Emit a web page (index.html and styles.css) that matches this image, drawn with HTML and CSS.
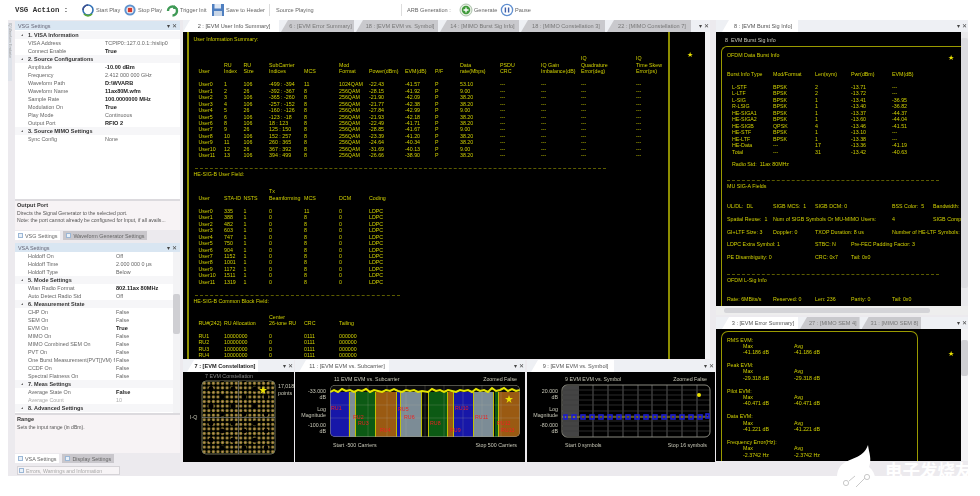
FILE: index.html
```html
<!DOCTYPE html>
<html lang="en">
<head>
<meta charset="utf-8">
<title>VSG Action</title>
<link rel="stylesheet" href="styles.css">
</head>
<body>
<div class="app">
  <header class="toolbar">
    <span class="action">VSG Action :</span>
    <span class="tool t-start"><svg class="ico" viewBox="0 0 14 14"><circle cx="7" cy="7" r="5" fill="#fff" stroke="#2f6fb5" stroke-width="1.6"/><path d="M2 7a5 5 0 0 1 5-5" fill="none" stroke="#3d4f8f" stroke-width="1.6"/><path d="M3 11a5.5 5.5 0 0 0 8 0" fill="none" stroke="#57a63a" stroke-width="1.8"/></svg>Start Play</span>
    <span class="tool t-stop"><svg class="ico" viewBox="0 0 14 14"><circle cx="7" cy="7" r="5.6" fill="#5f93cf"/><circle cx="7" cy="7" r="3.6" fill="#fff"/><rect x="4.8" y="4.8" width="4.4" height="4.4" fill="#d23a2e"/></svg>Stop Play</span>
    <span class="tool t-trig"><svg class="ico" viewBox="0 0 14 14"><path d="M3 8a4.5 4.5 0 1 1 4.5 4.5" fill="none" stroke="#3f9a56" stroke-width="2.4"/><path d="M9 2l4 4H8z" fill="#3f9a56"/></svg>Trigger Init</span>
    <span class="tool t-save"><svg class="ico" viewBox="0 0 14 14"><rect x="1" y="1" width="12" height="12" fill="#4f7fc0"/><rect x="3.5" y="1" width="6.5" height="4.5" fill="#dfe8f4"/><rect x="3" y="8" width="8" height="5" fill="#c9d6e6"/></svg>Save to Header</span>
    <span class="sep"></span>
    <span class="tool t-src">Source Playing</span>
    <span class="sep sep-arb"></span>
    <span class="tool t-arb">ARB Generation :</span>
    <span class="tool t-gen"><svg class="ico" viewBox="0 0 14 14"><circle cx="7" cy="7" r="6" fill="#e6efe2" stroke="#9ab59a" stroke-width=".8"/><circle cx="7" cy="7" r="4.2" fill="#3f9a3a"/><path d="M7 4.5v5M4.5 7h5" stroke="#fff" stroke-width="1.3"/></svg>Generate</span>
    <span class="tool t-pause"><svg class="ico" viewBox="0 0 14 14"><circle cx="7" cy="7" r="5.6" fill="#fff" stroke="#5f8fd0" stroke-width="1.3"/><path d="M5.4 4.6v4.8M8.6 4.6v4.8" stroke="#3f5fa8" stroke-width="1.4"/></svg>Pause</span>
  </header>

  <div class="workspace">
    <div class="rail"><span class="rail-tab">IQ Waveform Evaluator</span></div>

    <aside class="left">
      <section class="prop-panel prop-top">
        <div class="title-bar"><span>VSG Settings</span><span class="ctrl">&#9662; &#10005;</span></div>
        <div class="prop-list">
          <div class="cat">1. VISA Information</div>
          <div class="row"><span>VISA Address</span><span>TCPIP0::127.0.0.1::hislip0</span></div>
          <div class="row"><span>Connect Enable</span><b>True</b></div>
          <div class="cat">2. Source Configurations</div>
          <div class="row"><span>Amplitude</span><b>-10.00 dBm</b></div>
          <div class="row"><span>Frequency</span><span>2.412 000 000 GHz</span></div>
          <div class="row"><span>Waveform Path</span><b>D:\WVARB</b></div>
          <div class="row"><span>Waveform Name</span><b>11ax80M.wfm</b></div>
          <div class="row"><span>Sample Rate</span><b>100.0000000 MHz</b></div>
          <div class="row"><span>Modulation On</span><b>True</b></div>
          <div class="row"><span>Play Mode</span><span>Continuous</span></div>
          <div class="row"><span>Output Port</span><b>RFIO 2</b></div>
          <div class="cat">3. Source MIMO Settings</div>
          <div class="row"><span>Sync Config</span><span>None</span></div>
        </div>
        <div class="desc desc-top"><b>Output Port</b><br>Directs the Signal Generator to the selected port.<br>Note: the port cannot already be configured for Input, if all avails...</div>
        <div class="bottom-tabs"><span class="btab on"><i></i>VSG Settings</span><span class="btab"><i></i>Waveform Generator Settings</span></div>
      </section>

      <section class="prop-panel prop-low">
        <div class="title-bar"><span>VSA Settings</span><span class="ctrl">&#9662; &#10005;</span></div>
        <div class="prop-scroll">
          <div class="prop-list prop-list-low">
            <div class="row"><span>Holdoff On</span><span>Off</span></div>
            <div class="row"><span>Holdoff Time</span><span>2.000 000 0 &#956;s</span></div>
            <div class="row"><span>Holdoff Type</span><span>Below</span></div>
            <div class="cat">5. Mode Settings</div>
            <div class="row"><span>Wlan Radio Format</span><b>802.11ax 80MHz</b></div>
            <div class="row"><span>Auto Detect Radio Std</span><span>Off</span></div>
            <div class="cat">6. Measurement State</div>
            <div class="row"><span>CHP On</span><span>False</span></div>
            <div class="row"><span>SEM On</span><span>False</span></div>
            <div class="row"><span>EVM On</span><b>True</b></div>
            <div class="row"><span>MIMO On</span><span>False</span></div>
            <div class="row"><span>MIMO Combined SEM On</span><span>False</span></div>
            <div class="row"><span>PVT On</span><span>False</span></div>
            <div class="row"><span>One Burst Measurement(PVT[]VM) f</span><span>False</span></div>
            <div class="row"><span>CCDF On</span><span>False</span></div>
            <div class="row"><span>Spectral Flatness On</span><span>False</span></div>
            <div class="cat">7. Meas Settings</div>
            <div class="row"><span>Average State On</span><b>False</b></div>
            <div class="row dim"><span>Average Count</span><span>10</span></div>
            <div class="cat">8. Advanced Settings</div>
          </div>
          <div class="vscroll vs-low"><span></span></div>
        </div>
        <div class="desc desc-low"><b>Range</b><br>Sets the input range (in dBm).</div>
        <div class="bottom-tabs bt-low"><span class="btab on"><i></i>VSA Settings</span><span class="btab"><i></i>Display Settings</span></div>
      </section>
      <div class="err-tab"><i></i>Errors, Warnings and Information</div>
    </aside>

    <main class="center">
      <section class="doc doc-main">
        <nav class="tabs">
          <span class="tab on tw1">2 : [EVM User Info Summary]</span>
          <span class="tab tw2">6 : [EVM Error Summary]</span>
          <span class="tab tw3">18 : [EVM EVM vs. Symbol]</span>
          <span class="tab tw4">14 : [MIMO Burst Sig Info]</span>
          <span class="tab tw5">18 : [MIMO Constellation 3]</span>
          <span class="tab tw5">22 : [MIMO Constellation 7]</span>
          <span class="ctrl">&#9662; &#10005;</span>
        </nav>
        <div class="doc-body">
          <div class="screen">
            <div class="frame">
              <p class="t t-first">User Information Summary:</p>
              <table class="data">
                <tr class="head"><th>User</th><th>RU<br>Index</th><th>RU<br>Size</th><th>SubCarrier<br>Indices</th><th>MCS</th><th>Mod<br>Format</th><th>Power(dBm)</th><th>EVM(dB)</th><th>P/F</th><th>Data<br>rate(Mbps)</th><th>PSDU<br>CRC</th><th>IQ Gain<br>Imbalance(dB)</th><th>IQ<br>Quadrature<br>Error(deg)</th><th>IQ<br>Time Skew<br>Error(ps)</th></tr>
                <tr><td>User0</td><td>1</td><td>106</td><td>-499 : -394</td><td>11</td><td>1024QAM</td><td>-22.43</td><td>-41.57</td><td>P</td><td>53.10</td><td>---</td><td>---</td><td>---</td><td>---</td></tr>
                <tr><td>User1</td><td>2</td><td>26</td><td>-392 : -367</td><td>8</td><td>256QAM</td><td>-28.15</td><td>-41.92</td><td>P</td><td>9.00</td><td>---</td><td>---</td><td>---</td><td>---</td></tr>
                <tr><td>User2</td><td>3</td><td>106</td><td>-365 : -260</td><td>8</td><td>256QAM</td><td>-21.90</td><td>-42.09</td><td>P</td><td>38.20</td><td>---</td><td>---</td><td>---</td><td>---</td></tr>
                <tr><td>User3</td><td>4</td><td>106</td><td>-257 : -152</td><td>8</td><td>256QAM</td><td>-21.77</td><td>-42.38</td><td>P</td><td>38.20</td><td>---</td><td>---</td><td>---</td><td>---</td></tr>
                <tr><td>User4</td><td>5</td><td>26</td><td>-160 : -126</td><td>8</td><td>256QAM</td><td>-27.84</td><td>-42.99</td><td>P</td><td>9.00</td><td>---</td><td>---</td><td>---</td><td>---</td></tr>
                <tr><td>User5</td><td>6</td><td>106</td><td>-123 : -18</td><td>8</td><td>256QAM</td><td>-21.93</td><td>-42.18</td><td>P</td><td>38.20</td><td>---</td><td>---</td><td>---</td><td>---</td></tr>
                <tr><td>User6</td><td>8</td><td>106</td><td>18 : 123</td><td>8</td><td>256QAM</td><td>-22.49</td><td>-41.71</td><td>P</td><td>38.20</td><td>---</td><td>---</td><td>---</td><td>---</td></tr>
                <tr><td>User7</td><td>9</td><td>26</td><td>125 : 150</td><td>8</td><td>256QAM</td><td>-28.85</td><td>-41.67</td><td>P</td><td>9.00</td><td>---</td><td>---</td><td>---</td><td>---</td></tr>
                <tr><td>User8</td><td>10</td><td>106</td><td>152 : 257</td><td>8</td><td>256QAM</td><td>-23.39</td><td>-41.20</td><td>P</td><td>38.20</td><td>---</td><td>---</td><td>---</td><td>---</td></tr>
                <tr><td>User9</td><td>11</td><td>106</td><td>260 : 365</td><td>8</td><td>256QAM</td><td>-24.64</td><td>-40.34</td><td>P</td><td>38.20</td><td>---</td><td>---</td><td>---</td><td>---</td></tr>
                <tr><td>User10</td><td>12</td><td>26</td><td>367 : 392</td><td>8</td><td>256QAM</td><td>-31.69</td><td>-40.13</td><td>P</td><td>9.00</td><td>---</td><td>---</td><td>---</td><td>---</td></tr>
                <tr><td>User11</td><td>13</td><td>106</td><td>394 : 499</td><td>8</td><td>256QAM</td><td>-26.66</td><td>-38.90</td><td>P</td><td>38.20</td><td>---</td><td>---</td><td>---</td><td>---</td></tr>
              </table>
              <div class="dash dash-1"></div>
              <p class="t">HE-SIG-B User Field:</p>
              <table class="data data-2">
                <tr class="head"><th>User</th><th>STA-ID</th><th>NSTS</th><th>Tx<br>Beamforming</th><th>MCS</th><th>DCM</th><th>Coding</th><th></th><th></th><th></th><th></th><th></th><th></th><th></th></tr>
                <tr><td>User0</td><td>335</td><td>1</td><td>0</td><td>11</td><td>0</td><td>LDPC</td></tr>
                <tr><td>User1</td><td>388</td><td>1</td><td>0</td><td>8</td><td>0</td><td>LDPC</td></tr>
                <tr><td>User2</td><td>482</td><td>1</td><td>0</td><td>8</td><td>0</td><td>LDPC</td></tr>
                <tr><td>User3</td><td>603</td><td>1</td><td>0</td><td>8</td><td>0</td><td>LDPC</td></tr>
                <tr><td>User4</td><td>747</td><td>1</td><td>0</td><td>8</td><td>0</td><td>LDPC</td></tr>
                <tr><td>User5</td><td>750</td><td>1</td><td>0</td><td>8</td><td>0</td><td>LDPC</td></tr>
                <tr><td>User6</td><td>904</td><td>1</td><td>0</td><td>8</td><td>0</td><td>LDPC</td></tr>
                <tr><td>User7</td><td>1152</td><td>1</td><td>0</td><td>8</td><td>0</td><td>LDPC</td></tr>
                <tr><td>User8</td><td>1001</td><td>1</td><td>0</td><td>8</td><td>0</td><td>LDPC</td></tr>
                <tr><td>User9</td><td>1172</td><td>1</td><td>0</td><td>8</td><td>0</td><td>LDPC</td></tr>
                <tr><td>User10</td><td>1511</td><td>1</td><td>0</td><td>8</td><td>0</td><td>LDPC</td></tr>
                <tr><td>User11</td><td>1319</td><td>1</td><td>0</td><td>8</td><td>0</td><td>LDPC</td></tr>
              </table>
              <div class="dash dash-2"></div>
              <p class="t">HE-SIG-B Common Block Field:</p>
              <table class="data data-3">
                <tr class="head"><th>RU#(242)</th><th>RU Allocation</th><th></th><th>Center<br>26-tone RU</th><th>CRC</th><th>Tailing</th><th></th><th></th><th></th><th></th><th></th><th></th><th></th><th></th></tr>
                <tr><td>RU1</td><td>10000000</td><td></td><td>0</td><td>0111</td><td>000000</td></tr>
                <tr><td>RU2</td><td>10000000</td><td></td><td>0</td><td>0111</td><td>000000</td></tr>
                <tr><td>RU3</td><td>10000000</td><td></td><td>0</td><td>0111</td><td>000000</td></tr>
                <tr><td>RU4</td><td>10000000</td><td></td><td>0</td><td>0111</td><td>000000</td></tr>
              </table>
            </div>
            <span class="star star-main">&#9733;</span>
          </div>
          <div class="vscroll vs-main"><span></span></div>
        </div>
      </section>

      <div class="charts">
        <section class="chart c1">
          <nav class="tabs ctabs"><span class="tab on strong">7 : [EVM Constellation]</span><span class="ctrl">&#9662; &#10005;</span></nav>
          <svg class="plot" viewBox="0 0 111 90" width="111" height="90">
            <defs>
              <pattern id="qam" width="4.56" height="4.56" patternUnits="userSpaceOnUse" x="19" y="9">
                <circle cx="2.28" cy="2.28" r="1.6" fill="#9a8f2c"/>
                <circle cx="2.28" cy="2.28" r=".6" fill="#c9788a"/>
              </pattern>
              <pattern id="holes" width="22" height="17" patternUnits="userSpaceOnUse" x="24" y="14">
                <circle cx="4" cy="3" r="2.6" fill="#000"/><circle cx="15" cy="11" r="2.4" fill="#000"/>
              </pattern>
            </defs>
            <text class="lbl dimtxt" x="22" y="6">7  EVM Constellation</text>
            <rect x="19" y="9" width="73" height="73" rx="4" fill="url(#qam)" stroke="#8d8d70" stroke-width=".8"/>
            <rect x="19" y="9" width="73" height="73" rx="4" fill="url(#holes)"/>
            <path d="M55.5 9v73M19 45.5h73" stroke="#8a8a8a" stroke-width=".7"/>
            <text class="lbl" x="95" y="16">17,018</text>
            <text class="lbl" x="95" y="23">points</text>
            <text class="lbl" x="7" y="47">I-Q</text>
            <polygon points="80,14 81,17 84,17 81.5,19 82.5,22 80,20 77.500,22 78.500,19 76,17 79,17" fill="#e8e000"/>
          </svg>
        </section>

        <section class="chart c2">
          <nav class="tabs ctabs"><span class="tab on">11 : [EVM EVM vs. Subcarrier]</span><span class="ctrl">&#9662; &#10005;</span></nav>
          <svg class="plot" viewBox="0 0 230 90" width="230" height="90">
            <defs><clipPath id="pc2"><rect x="35" y="13" width="190" height="52" rx="5"/></clipPath></defs>
            <text class="lbl" x="39" y="9">11  EVM EVM vs. Subcarrier</text>
            <text class="lbl" x="222" y="9" text-anchor="end">Zoomed False</text>
            <g class="lbl" text-anchor="end">
              <text x="31" y="21">-33.000</text><text x="31" y="27">dB</text>
              <text x="31" y="39">Log</text><text x="31" y="45">Magnitude</text>
              <text x="31" y="55">-100.00</text><text x="31" y="61">dB</text>
            </g>
            <g clip-path="url(#pc2)">
              <rect x="35" y="13" width="190" height="52" fill="#0a0a0a"/>
              <rect x="35" y="20" width="19" height="45" fill="#1717a8"/>
              <rect x="55" y="20" width="5" height="45" fill="#7c8c96"/>
              <rect x="61" y="20" width="19" height="45" fill="#0c5a14"/>
              <rect x="81" y="20" width="20" height="45" fill="#9a5a12"/>
              <rect x="102" y="20" width="4" height="45" fill="#1717a8"/>
              <rect x="106" y="20" width="20" height="45" fill="#7c8c96"/>
              <rect x="134" y="20" width="18" height="45" fill="#0c5a14"/>
              <rect x="153" y="20" width="5" height="45" fill="#9a5a12"/>
              <rect x="159" y="20" width="19" height="45" fill="#1717a8"/>
              <rect x="179" y="20" width="19" height="45" fill="#7c8c96"/>
              <rect x="200" y="20" width="3" height="45" fill="#0c5a14"/>
              <rect x="204" y="20" width="21" height="45" fill="#9a5a12"/>
              <path d="M35 33h190M35 46h190M54 13v52M73 13v52M92 13v52M111 13v52M130 13v52M149 13v52M168 13v52M187 13v52M206 13v52" stroke="#b5b5a5" stroke-opacity=".35" stroke-width=".6"/>
              <path d="M54.500 20v45M60.500 20v45M80.500 20v45M101.500 20v45M105.500 20v45M126.500 20v45M133.500 20v45M152.500 20v45M158.500 20v45M178.500 20v45M198.500 20v45M203.500 20v45" stroke="#d4d400" stroke-width=".9"/>
              <polyline points="35,20 39,18 43,20 47,17 51,19 55,18 59,20 63,18 67,19 71,17 75,20 79,18 83,19 87,20 91,18 95,19 99,17 103,19 107,20 111,18 115,19 119,18 123,20 127,19 133,20 137,17 141,19 145,18 149,20 153,18 157,19 161,20 165,18 169,19 173,18 177,20 181,17 185,19 189,18 193,20 197,16 201,19 205,18 209,16 213,19 217,17 221,19 225,18" fill="none" stroke="#e6e600" stroke-width="2"/>
              <rect x="35" y="13" width="190" height="52" rx="5" fill="none" stroke="#9a9a8a" stroke-width="1"/>
            </g>
            <g class="ru">
              <text x="36" y="38">RU1</text><text x="58" y="47">RU2</text><text x="63" y="53">RU3</text><text x="85" y="60">RU4</text><text x="103" y="39">RU5</text><text x="109" y="47">RU6</text><text x="135" y="53">RU8</text><text x="155" y="60">RU9</text><text x="160" y="38">RU10</text><text x="180" y="47">RU11</text><text x="202" y="53">RU12</text><text x="206" y="60">RU13</text>
            </g>
            <polygon points="214,23 215,26 218,26 215.500,28 216.500,31 214,29 211.500,31 212.500,28 210,26 213,26" fill="#e8e000"/>
            <text class="lbl" x="38" y="75">Start -500  Carriers</text>
            <text class="lbl" x="222" y="75" text-anchor="end">Stop 500  Carriers</text>
          </svg>
        </section>

        <section class="chart c3">
          <nav class="tabs ctabs"><span class="tab on">9 : [EVM EVM vs. Symbol]</span><span class="ctrl">&#9662; &#10005;</span></nav>
          <svg class="plot" viewBox="0 0 188 90" width="188" height="90">
            <text class="lbl" x="38" y="9">9  EVM EVM vs. Symbol</text>
            <text class="lbl" x="180" y="9" text-anchor="end">Zoomed False</text>
            <g class="lbl" text-anchor="end">
              <text x="31" y="21">20.000</text><text x="31" y="27">dB</text>
              <text x="31" y="39">Log</text><text x="31" y="45">Magnitude</text>
              <text x="31" y="55">-80.000</text><text x="31" y="61">dB</text>
            </g>
            <rect x="36" y="14" width="16" height="50" fill="#444"/>
            <path d="M66 13v52M81 13v52M96 13v52M111 13v52M125 13v52M140 13v52M155 13v52M170 13v52" stroke="#6f6f6f" stroke-width=".8"/>
            <path d="M35 18h148M35 23h148M35 28h148M35 33h148M35 39h148M35 44h148M35 49h148M35 54h148M35 59h148" stroke="#3d3d3d" stroke-width=".7"/>
            <path d="M35 45h148" stroke="#b5a520" stroke-width="1"/>
            <rect x="35" y="13" width="148" height="52" rx="5" fill="none" stroke="#8a8a80" stroke-width="1"/>
            <g fill="none" stroke="#1d1dd0" stroke-width="1.6">
              <rect x="37" y="43" width="3" height="4"/><rect x="45" y="43" width="4" height="4"/><rect x="54" y="43" width="4" height="4"/><rect x="63" y="43" width="4" height="4"/><rect x="72" y="43" width="4" height="4"/><rect x="81" y="43" width="4" height="4"/><rect x="90" y="43" width="4" height="4"/><rect x="99" y="43" width="4" height="4"/><rect x="108" y="43" width="4" height="4"/><rect x="117" y="43" width="4" height="4"/><rect x="126" y="43" width="4" height="4"/><rect x="135" y="43" width="4" height="4"/><rect x="144" y="43" width="4" height="4"/><rect x="153" y="43" width="4" height="4"/><rect x="162" y="43" width="4" height="4"/><rect x="171" y="43" width="4" height="4"/><rect x="179" y="42" width="3" height="4"/>
            </g>
            <circle cx="172" cy="23" r="2" fill="#e8e000"/>
            <text class="lbl" x="38" y="75">Start 0  symbols</text>
            <text class="lbl" x="180" y="75" text-anchor="end">Stop 16  symbols</text>
          </svg>
        </section>
      </div>
    </main>

    <aside class="right">
      <section class="doc doc-burst">
        <nav class="tabs rtabs"><span class="tab on">8 : [EVM Burst Sig Info]</span><span class="ctrl">&#9662; &#10005;</span></nav>
        <div class="doc-body db-burst">
          <div class="screen">
            <p class="t burst-title">8  EVM Burst Sig Info</p>
            <div class="frame frame-burst">
              <p class="t">OFDM Data Burst Info</p>
              <table class="burst">
                <tr class="head"><th>Burst Info Type</th><th>Mod/Format</th><th>Len(sym)</th><th>Pwr(dBm)</th><th>EVM(dB)</th></tr>
                <tr><td>L-STF</td><td>BPSK</td><td>2</td><td>-13.71</td><td>---</td></tr>
                <tr><td>L-LTF</td><td>BPSK</td><td>2</td><td>-13.72</td><td>---</td></tr>
                <tr><td>L-SIG</td><td>BPSK</td><td>1</td><td>-13.41</td><td>-36.95</td></tr>
                <tr><td>R-LSIG</td><td>BPSK</td><td>1</td><td>-13.40</td><td>-36.82</td></tr>
                <tr><td>HE-SIGA1</td><td>BPSK</td><td>1</td><td>-13.37</td><td>-44.37</td></tr>
                <tr><td>HE-SIGA2</td><td>BPSK</td><td>1</td><td>-13.60</td><td>-44.04</td></tr>
                <tr><td>HE-SIGB</td><td>QPSK</td><td>4</td><td>-13.46</td><td>-41.51</td></tr>
                <tr><td>HE-STF</td><td>BPSK</td><td>1</td><td>-13.10</td><td>---</td></tr>
                <tr><td>HE-LTF</td><td>BPSK</td><td>1</td><td>-13.38</td><td>---</td></tr>
                <tr><td>HE-Data</td><td>---</td><td>17</td><td>-13.36</td><td>-41.19</td></tr>
                <tr><td>Total</td><td>---</td><td>31</td><td>-13.42</td><td>-40.63</td></tr>
              </table>
              <p class="t radio">Radio Std:  11ax 80MHz</p>
              <div class="dash dash-r"></div>
              <p class="t">MU SIG-A Fields</p>
              <div class="fields f-first">
                <span>UL/DL:  &nbsp;DL</span><span>SIGB MCS:  &nbsp;1</span><span>SIGB DCM:  0</span><span></span><span>BSS Color:  &nbsp;5</span><span>Bandwidth:</span>
              </div>
              <div class="fields">
                <span class="sr">Spatial Reuse: &nbsp;1</span><span>Num of SIGB Symbols Or MU-MIMO Users:</span><span></span><span></span><span>4</span><span>SIGB Compression</span>
              </div>
              <div class="fields">
                <span>GI+LTF Size: 3</span><span>Doppler: 0</span><span>TXOP Duration:  8 us</span><span></span><span>Number of HE-LTF Symbols:</span><span></span>
              </div>
              <div class="fields">
                <span>LDPC Extra Symbol:  1</span><span></span><span>STBC:  N</span><span>Pre-FEC Padding Factor:  3</span><span></span><span></span>
              </div>
              <div class="fields">
                <span>PE Disambiguity:  0</span><span></span><span>CRC:  0x7</span><span>Tail:  0x0</span><span></span><span></span>
              </div>
              <div class="dash dash-r dash-r2"></div>
              <p class="t">OFDM L-Sig Info</p>
              <div class="fields f-rate">
                <span>Rate: 6MBits/s</span><span>Reserved: 0</span><span>Len: 236</span><span>Parity: 0</span><span>Tail: 0x0</span><span></span>
              </div>
            </div>
            <span class="star star-r1">&#9733;</span>
          </div>
          <div class="vscroll vs-burst"><span></span></div>
        </div>
        <div class="hscroll"><span></span></div>
      </section>

      <section class="doc doc-err">
        <nav class="tabs rtabs"><span class="tab on">3 : [EVM Error Summary]</span><span class="tab">27 : [MIMO SEM 4]</span><span class="tab">31 : [MIMO SEM 8]</span><span class="ctrl">&#9662; &#10005;</span></nav>
        <div class="doc-body db-err">
          <div class="screen">
            <div class="frame frame-err">
              <p class="t">RMS EVM:</p><div class="maxavg"><span>Max</span><span>Avg</span><span>-41.186 dB</span><span>-41.186 dB</span></div>
              <p class="t gp">Peak EVM:</p><div class="maxavg"><span>Max</span><span>Avg</span><span>-29.318 dB</span><span>-29.318 dB</span></div>
              <p class="t gp">Pilot EVM:</p><div class="maxavg"><span>Max</span><span>Avg</span><span>-40.471 dB</span><span>-40.471 dB</span></div>
              <p class="t gp">Data EVM:</p><div class="maxavg"><span>Max</span><span>Avg</span><span>-41.221 dB</span><span>-41.221 dB</span></div>
              <p class="t gp">Frequency Error(Hz):</p><div class="maxavg"><span>Max</span><span>Avg</span><span>-2.3742 Hz</span><span>-2.3742 Hz</span></div>
            </div>
            <span class="star star-r2">&#9733;</span>
          </div>
          <div class="vscroll vs-err"><span></span></div>
        </div>
      </section>
    </aside>
  </div>
</div>

<div class="watermark">
  <svg class="wm-logo" viewBox="0 0 44 50" width="44" height="50"><path d="M33 1c1 8 4 14 1 22 8 6 8 18 2 25H8C0 38 0 25 9 19c8-5 20-6 24-18z" fill="#fff"/><path d="M14 37l6-5M30 34l-9 9" stroke="#c9c9c9" stroke-width="1"/><circle cx="11" cy="39" r="2.600" fill="none" stroke="#c9c9c9"/><circle cx="32" cy="33" r="2.600" fill="none" stroke="#c9c9c9"/></svg>
  <span class="wm-text">电子发烧友</span>
</div>
</body>
</html>
```
FILE: styles.css
```css
* { box-sizing: border-box; }
html, body { margin: 0; padding: 0; background: #fff; }
body { width: 980px; height: 496px; overflow: hidden; position: relative; font-family: "Liberation Sans", Arial, sans-serif; }
p { margin: 0; }

.app { width: 960px; height: 476px; margin-left: 8px; display: flex; flex-direction: column; background: #eceaee; filter: blur(.4px); overflow: hidden; }

/* toolbar */
.toolbar { height: 20px; flex: none; background: #fff; display: flex; align-items: center; font-size: 5.6px; color: #666; white-space: nowrap; padding-left: 7px; }
.action { font: bold 7.4px "Liberation Mono", monospace; color: #333; width: 66px; }
.tool { display: flex; align-items: center; gap: 1px; }
.ico { width: 14px; height: 14px; flex: none; }
.t-start { width: 42px; }
.t-stop { width: 42px; }
.t-trig { width: 46px; }
.t-save { width: 58px; }
.sep { width: 1px; height: 12px; background: #ddd; }
.t-src { margin-left: 6px; width: 125px; }
.sep-arb { margin-right: 5px; }
.t-arb { width: 52px; }
.t-gen { width: 41px; }
.t-pause { width: 40px; }

.workspace { flex: 1; display: flex; min-height: 0; }

/* rail */
.rail { width: 7px; flex: none; }
.rail-tab { display: block; width: 4px; height: 58px; margin-top: 3px; background: #dfe3ea; color: #999; font-size: 3.4px; line-height: 4px; writing-mode: vertical-rl; white-space: nowrap; overflow: hidden; }

/* left */
.left { width: 165px; flex: none; margin-right: 3px; display: flex; flex-direction: column; font-size: 5.4px; color: #666; }
.prop-panel { display: flex; flex-direction: column; flex: none; }
.prop-top { height: 220px; margin-top: 1px; }
.prop-low { height: 220px; margin-top: 2px; }
.title-bar { height: 9px; flex: none; background: #d9e6f2; display: flex; justify-content: space-between; align-items: center; padding: 0 3px; color: #667; font-size: 5.4px; }
.ctrl { color: #444; font-size: 6px; white-space: nowrap; }
.prop-list { flex: 1; background: #fff; padding-top: 1px; overflow: hidden; min-height: 0; }
.cat { height: 8px; line-height: 8px; padding-left: 13px; font-weight: bold; color: #333; position: relative; background: #f6f6f8; font-size: 5.5px; }
.cat::before { content: ""; position: absolute; left: 6px; top: 3px; border-left: 2px solid transparent; border-bottom: 2px solid #666; }
.row { height: 8px; line-height: 8px; display: grid; grid-template-columns: 77px 1fr; padding-left: 13px; white-space: nowrap; overflow: hidden; }
.row b { color: #222; font-size: 5.6px; }
.prop-low .row { grid-template-columns: 88px 1fr; }
.row.dim { color: #aaa; }
.desc { flex: none; background: #f7f3f5; border-top: 2px solid #dcdade; color: #555; font-size: 5.1px; line-height: 7.6px; padding: 1px 2px; white-space: nowrap; overflow: hidden; }
.desc b { color: #333; font-size: 5.6px; }
.desc-top { height: 31px; }
.desc-low { height: 40px; }
.bottom-tabs { height: 11px; flex: none; display: flex; padding-top: 1px; }
.bt-low { height: 10px; }
.btab { height: 9px; padding: 0 3px; display: flex; align-items: center; gap: 2px; background: #c9c7cc; color: #666; white-space: nowrap; }
.btab.on { background: #fff; margin-right: 3px; }
.btab i, .err-tab i { width: 5px; height: 5px; border: 1px solid #9bb7d6; background: #eaf1f8; display: block; }
.prop-scroll { flex: 1; display: flex; min-height: 0; }
.prop-list-low { padding-top: 0; margin-top: 0; }
.err-tab { width: 103px; height: 9px; flex: none; margin: 3px 0 0 2px; background: #f7f4f6; border: 1px solid #d5d3d7; display: flex; align-items: center; gap: 2px; padding-left: 1px; color: #a8a8a8; font-size: 5.2px; white-space: nowrap; }

/* scrollbars */
.vscroll { width: 7px; flex: none; background: #f3f3f5; padding-top: 40px; }
.vscroll span { display: block; height: 40px; background: #cfcfd3; border-radius: 2px; }
.vs-main span { height: 0; }
.vs-main { width: 5px; padding-top: 0; }
.vs-low { padding-top: 42px; }
.vs-burst { padding-top: 6px; background: #e9e9ec; }
.vs-burst span { height: 250px; background: #dcdce0; }
.vs-err { padding-top: 11px; }
.vs-err span { height: 36px; }
.hscroll { height: 9px; background: #eee; padding: 2px 38px 2px 8px; }
.hscroll span { display: block; height: 5px; background: #d4d4d8; border-radius: 2px; }

/* docs */
.center { width: 533px; flex: none; display: flex; flex-direction: column; }
.doc-main { width: 527px; }
.tabs { height: 12px; flex: none; display: flex; align-items: flex-end; gap: 2px; position: relative; font-size: 5.6px; color: #555; white-space: nowrap; background: #eef0f4; }
.tabs .ctrl { margin-left: auto; padding: 0 1px 3px 0; }
.tab { height: 12px; line-height: 12px; background: #c9c9cd; padding: 0 2px 0 8px; color: #777; clip-path: polygon(7px 0, 100% 0, 100% 100%, 0 100%); text-align: center; }
.tab.on { background: #fff; color: #555; }
.tab.strong { color: #222; font-weight: bold; padding-left: 6px; padding-right: 1px; }
.tw1 { width: 96px; }
.tw2 { width: 73px; }
.tw3 { width: 82px; }
.tw4 { width: 79px; }
.tw5 { width: 84px; }
.doc-body { display: flex; background: #000; height: 327px; }
.screen { flex: 1; background: #000; position: relative; overflow: hidden; min-width: 0; color: #d0d000; font-size: 5.3px; line-height: 6.4px; }
.frame { width: 483px; height: 400px; margin-left: 4px; border-left: 2px solid #8e8e00; border-right: 2px solid #8e8e00; padding: 4px 0 0 4.5px; }
.t { white-space: pre; height: 6.4px; }
.dash { border-top: 1px dashed #5c5c00; height: 0; }
.dash-1 { width: 411px; margin: 10px 0 2px 1px; }
.dash-2 { width: 205px; margin: 9.500px 0 2px 1px; }

.data { border-collapse: collapse; table-layout: fixed; width: 470px; margin: 13px 0 0 5px; }
.data th { font-weight: normal; text-align: left; vertical-align: bottom; padding: 0 0 6.8px; line-height: 6.4px; white-space: nowrap; }
.data td { padding: 0; height: 6.42px; line-height: 6.42px; white-space: nowrap; overflow: visible; }
.data th:nth-child(1), .data td:nth-child(1) { width: 25.500px; }
.data th:nth-child(2), .data td:nth-child(2) { width: 19.500px; }
.data th:nth-child(3), .data td:nth-child(3) { width: 25.500px; }
.data th:nth-child(4), .data td:nth-child(4) { width: 35px; }
.data th:nth-child(5), .data td:nth-child(5) { width: 35px; }
.data th:nth-child(6), .data td:nth-child(6) { width: 30px; }
.data th:nth-child(7), .data td:nth-child(7) { width: 36px; }
.data th:nth-child(8), .data td:nth-child(8) { width: 30px; }
.data th:nth-child(9), .data td:nth-child(9) { width: 25px; }
.data th:nth-child(10), .data td:nth-child(10) { width: 40px; }
.data th:nth-child(11), .data td:nth-child(11) { width: 41px; }
.data th:nth-child(12), .data td:nth-child(12) { width: 40px; }
.data th:nth-child(13), .data td:nth-child(13) { width: 55px; }
.data-2 { margin-top: 10.600px; }
.data-3 { margin-top: 10px; }
.data-3 th { padding-bottom: 6.2px; }
.star { position: absolute; color: #e8e000; font-size: 7px; line-height: 7px; }
.star-main { left: 504px; top: 19px; }

/* charts */
.charts { height: 102px; flex: none; margin-top: 1px; display: flex; gap: 1px; }
.chart { background: #000; display: flex; flex-direction: column; }
.c1 { width: 111px; }
.c2 { width: 230px; margin-right: 1px; }
.c3 { width: 188px; }
.ctabs { padding-left: 4px; }
.c1 .ctabs .tab { width: 71px; }
.c2 .ctabs .tab { width: 90px; }
.c3 .ctabs .tab { width: 83px; }
.plot { display: block; }
.lbl, .lbl text { font: 5.3px "Liberation Sans", Arial, sans-serif; fill: #c8c8b8; }
.dimtxt { fill: #888; }
.ru text { font: 5.3px "Liberation Sans", Arial, sans-serif; fill: #ee2222; }

/* right */
.right { width: 252px; flex: none; display: flex; flex-direction: column; }
.rtabs { padding-left: 6px; }
.rtabs .tab { padding: 0 3px 0 9px; }
.rtabs .tab.on { min-width: 76px; }
.db-burst { height: 274px; }
.burst-title { color: #c9c9c0; padding: 5px 0 0 9px; height: 14px; }
.frame-burst { margin-left: 5px; width: 400px; height: 300px; border: 1.500px solid #9a9a00; border-bottom: 0; border-right: 0; border-radius: 6px 0 0 0; padding: 5px 0 0 5px; }
.burst { border-collapse: collapse; table-layout: fixed; width: 206px; margin-top: 12.600px; }
.burst th { font-weight: normal; text-align: left; padding: 0 0 6.500px; line-height: 6.4px; white-space: nowrap; }
.burst td { padding: 0; height: 6.5px; line-height: 6.5px; white-space: nowrap; }
.burst th:nth-child(1), .burst td:nth-child(1) { width: 46px; }
.burst th:nth-child(2), .burst td:nth-child(2) { width: 42px; }
.burst th:nth-child(3), .burst td:nth-child(3) { width: 36px; }
.burst th:nth-child(4), .burst td:nth-child(4) { width: 41px; }
.burst td:nth-child(1) { padding-left: 5px; }
.radio { margin: 6px 0 0 5px; }
.dash-r { width: 212px; margin: 12px 0 2px 0; }
.fields { display: grid; grid-template-columns: 46px 42px 36px 41px 41px 80px; height: 6.4px; margin-top: 6.5px; white-space: nowrap; }
.f-first { margin-top: 13.600px; }
.f-rate { margin-top: 13px; }
.fields span { min-width: 0; }
.dash-r2 { margin-top: 13px; }
.star-r1 { left: 232px; top: 22px; }

.doc-err { margin-top: 2px; }
.db-err { height: 132px; }
.frame-err { width: 196.500px; margin: 2px 0 0 5px; height: 200px; border: 1.500px solid #9a9a00; border-bottom: 0; border-radius: 7px 7px 0 0; padding: 4.500px 0 0 5px; }
.maxavg { display: grid; grid-template-columns: 51px 60px; padding-left: 16px; line-height: 6.4px; }
.gp { margin-top: 6.400px; }
.star-r2 { left: 232px; top: 21px; }

/* watermark overlays the shot */
.watermark { position: absolute; left: 835px; top: 444px; display: flex; pointer-events: none; }
.wm-logo { display: block; }
.wm-text { position: absolute; left: 50px; top: 16px; color: #fff; font: bold 17.500px "Noto Sans CJK SC", sans-serif; line-height: 20px; white-space: nowrap; }
```
